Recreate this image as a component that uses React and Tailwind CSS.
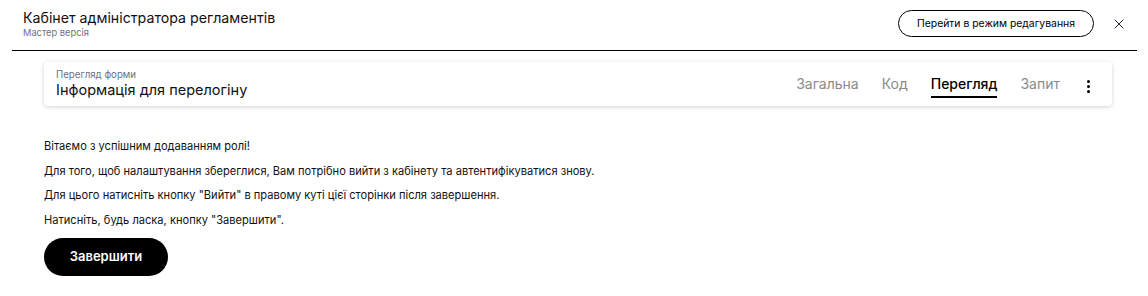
import React from 'react';
import { X } from 'lucide-react';

const tabs = ['Загальна', 'Код', 'Перегляд', 'Запит'];

const App = () => {
    const active = 'Перегляд';

    return (
        <div className="w-[1148px] h-[296px] bg-white text-black font-['Inter','Liberation_Sans',sans-serif]">
            <div className="flex items-center justify-between ml-[12px] mr-[11px] pl-[11px] pr-[10px] h-[51px] border-b-[1.5px] border-black">
                <div className="flex flex-col pb-[2px]">
                    <span className="text-[14.2px] leading-[18px] text-[#111]">Кабінет адміністратора регламентів</span>
                    <span className="text-[9.3px] leading-[12px] text-gray-500">Мастер версія</span>
                </div>
                <div className="flex items-center gap-[17px] pb-[3px]">
                    <button className="h-[27px] w-[196px] rounded-full border-[1.5px] border-black text-[10.4px]">
                        Перейти в режим редагування
                    </button>
                    <X size={16} strokeWidth={1.5} className="text-gray-800" />
                </div>
            </div>

            <div className="px-[44px] pt-[11px]">
                <div className="flex items-center justify-between h-[44px] pl-[12px] pr-[22px] rounded-[4px] bg-white shadow-[0_1px_4px_rgba(0,0,0,0.18)] w-[1068px]">
                    <div className="flex flex-col">
                        <span className="text-[9.7px] leading-[11px] text-gray-500">Перегляд форми</span>
                        <span className="text-[14.5px] leading-[19px] text-[#111]">Інформація для перелогіну</span>
                    </div>
                    <div className="flex items-center gap-[23px]">
                        {tabs.map((t) => (
                            <div
                                key={t}
                                className={`pt-[2px] pb-[3px] text-[14px] leading-[18px] border-b-2 mt-[3px] ${t === active ? 'border-black text-black font-medium' : 'border-transparent text-[#8a8a8a]'}`}
                            >
                                {t}
                            </div>
                        ))}
                        <div className="flex flex-col gap-[2px] ml-[4px] mt-[4px]">
                            <span className="w-[3px] h-[3px] rounded-full bg-black" />
                            <span className="w-[3px] h-[3px] rounded-full bg-black" />
                            <span className="w-[3px] h-[3px] rounded-full bg-black" />
                        </div>
                    </div>
                </div>

                <div className="pt-[33px] flex flex-col gap-[9.5px] text-[11.1px] leading-[15px] text-[#111]">
                    <p>Вітаємо з успішним додаванням ролі!</p>
                    <p>Для того, щоб налаштування збереглися, Вам потрібно вийти з кабінету та автентифікуватися знову.</p>
                    <p>Для цього натисніть кнопку "Вийти" в правому куті цієї сторінки після завершення.</p>
                    <p>Натисніть, будь ласка, кнопку "Завершити".</p>
                </div>

                <button className="mt-[10px] h-[38px] w-[124px] rounded-full bg-black text-white text-[13px] font-semibold">
                    Завершити
                </button>
            </div>
        </div>
    );
};

export default App;
